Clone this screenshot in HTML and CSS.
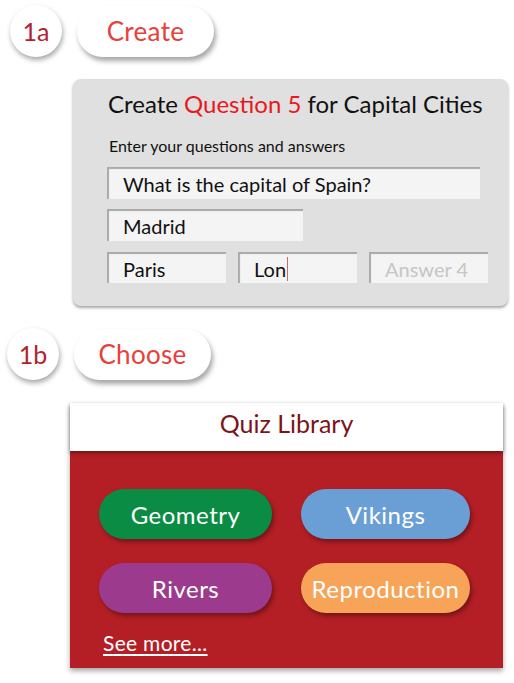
FILE: index.html
```html
<!DOCTYPE html>
<html>
<head>
<meta charset="utf-8">
<link rel="stylesheet" href="styles.css">
</head>
<body>
<div class="page">
  <div class="step step-a">
    <div class="badge">1a</div>
    <div class="pill">Create</div>
  </div>

  <div class="create-card">
    <div class="title">Create <span class="hl">Question 5</span> for Capital Cities</div>
    <div class="subtitle">Enter your questions and answers</div>
    <div class="field field-q">What is the capital of Spain?</div>
    <div class="field field-a">Madrid</div>
    <div class="answers">
      <div class="field field-s">Paris</div>
      <div class="field field-s">Lon<span class="caret"></span></div>
      <div class="field field-s placeholder">Answer 4</div>
    </div>
  </div>

  <div class="step step-b">
    <div class="badge">1b</div>
    <div class="pill">Choose</div>
  </div>

  <div class="library">
    <div class="lib-head">Quiz Library</div>
    <div class="lib-body">
      <div class="topics">
        <div class="topic green">Geometry</div>
        <div class="topic blue">Vikings</div>
        <div class="topic purple">Rivers</div>
        <div class="topic orange">Reproduction</div>
      </div>
      <a class="more">See more...</a>
    </div>
  </div>
</div>
</body>
</html>
```

FILE: styles.css
```css
html, body {
  margin: 0;
  padding: 0;
  background: #ffffff;
}
body {
  font-family: "Lato", "Open Sans", sans-serif;
  width: 514px;
  height: 683px;
  overflow: hidden;
}
.page {
  display: flex;
  flex-direction: column;
  align-items: flex-start;
}
.step {
  display: flex;
  align-items: center;
  gap: 15px;
}
.step-a {
  margin: 5px 0 0 10px;
}
.step-b {
  margin: 22px 0 0 7px;
}
.badge {
  width: 52px;
  height: 52px;
  border-radius: 50%;
  background: #fff;
  box-shadow: 1px 3px 5px rgba(0,0,0,0.35);
  display: flex;
  align-items: center;
  justify-content: center;
  font-size: 25px;
  color: #b5202e;
}
.pill {
  width: 137px;
  height: 51px;
  border-radius: 26px;
  background: #fff;
  box-shadow: 2px 4px 5px rgba(0,0,0,0.35);
  display: flex;
  align-items: center;
  justify-content: center;
  font-size: 26px;
  letter-spacing: 0.3px;
  color: #e8403a;
}
.create-card {
  margin: 22px 0 0 73px;
  width: 435px;
  box-sizing: border-box;
  padding: 10px 20px 23px 34px;
  background: #e0e0e0;
  border-radius: 8px;
  box-shadow: 0 2px 3px rgba(0,0,0,0.35);
  display: flex;
  flex-direction: column;
}
.title {
  font-size: 24px;
  line-height: 30px;
  color: #111;
  margin-left: 1px;
}
.hl {
  color: #e8191e;
}
.subtitle {
  font-size: 16px;
  line-height: 20px;
  margin: 17px 0 0 2px;
  color: #111;
}
.field {
  height: 32px;
  box-sizing: border-box;
  background: #f4f4f4;
  box-shadow: inset 2px 2px 1px #a9a9a9;
  font-size: 20px;
  color: #111;
  display: flex;
  align-items: center;
  padding: 2px 0 0 16px;
}
.field-q {
  margin-top: 11px;
  width: 373px;
}
.field-a {
  margin-top: 10px;
  width: 196px;
}
.answers {
  margin-top: 11px;
  display: flex;
  gap: 12px;
}
.field-s {
  width: 120px;
  height: 31px;
}
.placeholder {
  color: #c6c6c6;
}
.caret {
  display: inline-block;
  width: 1px;
  height: 24px;
  background: #cc6a66;
  margin-left: 1px;
}
.library {
  margin: 23px 0 0 70px;
  width: 433px;
  box-shadow: 0 3px 5px rgba(0,0,0,0.35);
}
.lib-head {
  position: relative;
  z-index: 1;
  height: 48px;
  box-sizing: border-box;
  padding-bottom: 8px;
  background: #fff;
  box-shadow: 0 2px 4px rgba(0,0,0,0.4);
  display: flex;
  align-items: center;
  justify-content: center;
  font-size: 25px;
  color: #7c1419;
}
.lib-body {
  background: #b31f25;
  height: 217px;
  box-sizing: border-box;
  padding: 38px 0 0 29px;
  display: flex;
  flex-direction: column;
  align-items: flex-start;
}
.topics {
  display: grid;
  grid-template-columns: 173px 169px;
  column-gap: 29px;
  row-gap: 24px;
}
.topic {
  height: 50px;
  border-radius: 25px;
  display: flex;
  align-items: center;
  justify-content: center;
  font-size: 24px;
  letter-spacing: 0.5px;
  color: #fff;
  box-shadow: 2px 3px 4px rgba(0,0,0,0.35);
}
.green { background: #0a8c45; }
.blue { background: #6a9fd5; }
.purple { background: #9c3b8e; }
.orange { background: #f7a458; }
.more {
  margin: 17px 0 0 4px;
  font-size: 21px;
  letter-spacing: 0.3px;
  color: #fff;
  text-decoration: underline;
  text-underline-offset: 3px;
}
```
